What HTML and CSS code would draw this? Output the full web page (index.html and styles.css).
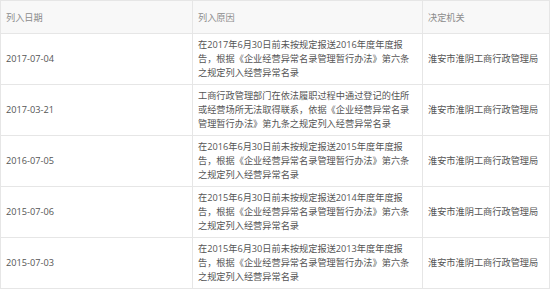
FILE: index.html
```html
<!DOCTYPE html>
<html lang="zh-CN">
<head>
<meta charset="utf-8">
<title>经营异常名录</title>
<link rel="stylesheet" href="styles.css">
</head>
<body>
<table class="records">
  <colgroup>
    <col class="c-date">
    <col class="c-reason">
    <col class="c-org">
  </colgroup>
  <thead>
    <tr><th>列入日期</th><th>列入原因</th><th>决定机关</th></tr>
  </thead>
  <tbody>
    <tr>
      <td>2017-07-04</td>
      <td class="reason">在2017年6月30日前未按规定报送2016年度年度报<br>告，根据《企业经营异常名录管理暂行办法》第六条<br>之规定列入经营异常名录</td>
      <td>淮安市淮阴工商行政管理局</td>
    </tr>
    <tr>
      <td>2017-03-21</td>
      <td class="reason">工商行政管理部门在依法履职过程中通过登记的住所<br>或经营场所无法取得联系，依据《企业经营异常名录<br>管理暂行办法》第九条之规定列入经营异常名录</td>
      <td>淮安市淮阴工商行政管理局</td>
    </tr>
    <tr>
      <td>2016-07-05</td>
      <td class="reason">在2016年6月30日前未按规定报送2015年度年度报<br>告，根据《企业经营异常名录管理暂行办法》第六条<br>之规定列入经营异常名录</td>
      <td>淮安市淮阴工商行政管理局</td>
    </tr>
    <tr>
      <td>2015-07-06</td>
      <td class="reason">在2015年6月30日前未按规定报送2014年度年度报<br>告，根据《企业经营异常名录管理暂行办法》第六条<br>之规定列入经营异常名录</td>
      <td>淮安市淮阴工商行政管理局</td>
    </tr>
    <tr>
      <td>2015-07-03</td>
      <td class="reason">在2015年6月30日前未按规定报送2013年度年度报<br>告，根据《企业经营异常名录管理暂行办法》第六条<br>之规定列入经营异常名录</td>
      <td>淮安市淮阴工商行政管理局</td>
    </tr>
  </tbody>
</table>
</body>
</html>
```
FILE: styles.css
```css
html, body {
  margin: 0;
  padding: 0;
  background: #ffffff;
}
body {
  font-family: "Open Sans", "Noto Sans CJK SC", sans-serif;
  font-size: 9.2px;
  color: #555555;
}
.records {
  border-collapse: collapse;
  table-layout: fixed;
  width: 549px;
}
.c-date { width: 192px; }
.c-reason { width: 230px; }
.c-org { width: 127px; }
.records th,
.records td {
  border: 1px solid #e6e6e6;
  text-align: left;
  vertical-align: middle;
  padding: 4px 5px;
  line-height: 14px;
}
.records th {
  height: 24px;
  background: #f8f8f8;
  color: #8c8c8c;
  font-weight: normal;
  padding-top: 5px;
  padding-bottom: 3px;
}
.records td {
  height: 42px;
}
.records td.reason {
  padding-right: 8px;
  white-space: nowrap;
}
```
